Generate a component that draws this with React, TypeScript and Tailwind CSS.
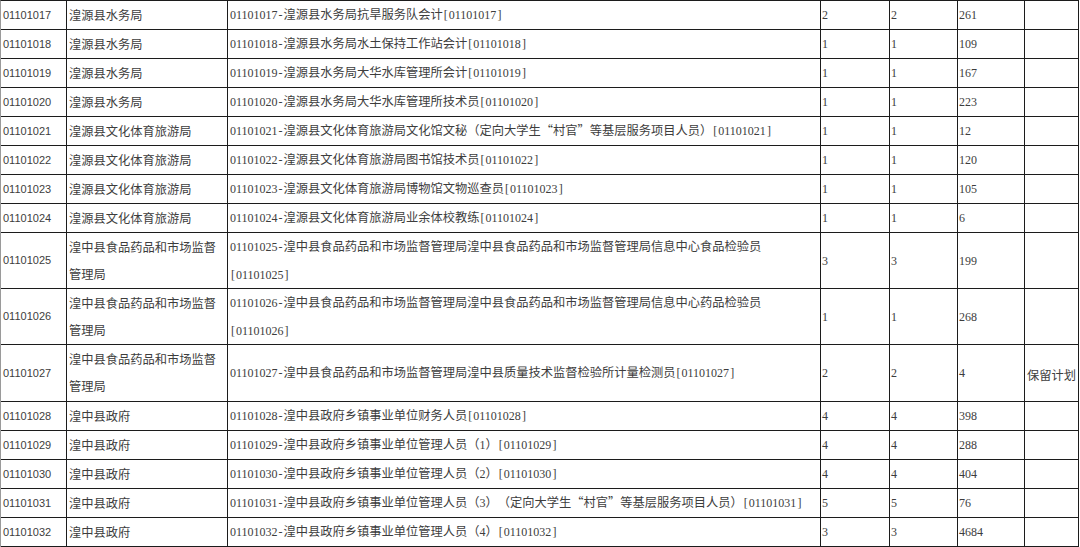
import React from 'react';

interface Row {
  code: string;
  dept: string[];
  pos: string[];
  plan: string;
  pass: string;
  apply: string;
  note?: string;
  h: string;
}

const SHUIWU = ['湟源县水务局'];
const WENHUA = ['湟源县文化体育旅游局'];
const SHIPIN = ['湟中县食品药品和市场监督', '管理局'];
const ZHENGFU = ['湟中县政府'];

const rows: Row[] = [
  { code: '01101017', dept: SHUIWU, pos: ['01101017-湟源县水务局抗旱服务队会计[01101017]'], plan: '2', pass: '2', apply: '261', h: 'h-[29px]' },
  { code: '01101018', dept: SHUIWU, pos: ['01101018-湟源县水务局水土保持工作站会计[01101018]'], plan: '1', pass: '1', apply: '109', h: 'h-[29px]' },
  { code: '01101019', dept: SHUIWU, pos: ['01101019-湟源县水务局大华水库管理所会计[01101019]'], plan: '1', pass: '1', apply: '167', h: 'h-[29px]' },
  { code: '01101020', dept: SHUIWU, pos: ['01101020-湟源县水务局大华水库管理所技术员[01101020]'], plan: '1', pass: '1', apply: '223', h: 'h-[29px]' },
  { code: '01101021', dept: WENHUA, pos: ['01101021-湟源县文化体育旅游局文化馆文秘（定向大学生“村官”等基层服务项目人员）[01101021]'], plan: '1', pass: '1', apply: '12', h: 'h-[29px]' },
  { code: '01101022', dept: WENHUA, pos: ['01101022-湟源县文化体育旅游局图书馆技术员[01101022]'], plan: '1', pass: '1', apply: '120', h: 'h-[29px]' },
  { code: '01101023', dept: WENHUA, pos: ['01101023-湟源县文化体育旅游局博物馆文物巡查员[01101023]'], plan: '1', pass: '1', apply: '105', h: 'h-[29px]' },
  { code: '01101024', dept: WENHUA, pos: ['01101024-湟源县文化体育旅游局业余体校教练[01101024]'], plan: '1', pass: '1', apply: '6', h: 'h-[29px]' },
  { code: '01101025', dept: SHIPIN, pos: ['01101025-湟中县食品药品和市场监督管理局湟中县食品药品和市场监督管理局信息中心食品检验员', '[01101025]'], plan: '3', pass: '3', apply: '199', h: 'h-[56px]' },
  { code: '01101026', dept: SHIPIN, pos: ['01101026-湟中县食品药品和市场监督管理局湟中县食品药品和市场监督管理局信息中心药品检验员', '[01101026]'], plan: '1', pass: '1', apply: '268', h: 'h-[56px]' },
  { code: '01101027', dept: SHIPIN, pos: ['01101027-湟中县食品药品和市场监督管理局湟中县质量技术监督检验所计量检测员[01101027]'], plan: '2', pass: '2', apply: '4', note: '保留计划', h: 'h-[57px]' },
  { code: '01101028', dept: ZHENGFU, pos: ['01101028-湟中县政府乡镇事业单位财务人员[01101028]'], plan: '4', pass: '4', apply: '398', h: 'h-[29px]' },
  { code: '01101029', dept: ZHENGFU, pos: ['01101029-湟中县政府乡镇事业单位管理人员（1）[01101029]'], plan: '4', pass: '4', apply: '288', h: 'h-[29px]' },
  { code: '01101030', dept: ZHENGFU, pos: ['01101030-湟中县政府乡镇事业单位管理人员（2）[01101030]'], plan: '4', pass: '4', apply: '404', h: 'h-[29px]' },
  { code: '01101031', dept: ZHENGFU, pos: ['01101031-湟中县政府乡镇事业单位管理人员（3）（定向大学生“村官”等基层服务项目人员）[01101031]'], plan: '5', pass: '5', apply: '76', h: 'h-[29px]' },
  { code: '01101032', dept: ZHENGFU, pos: ['01101032-湟中县政府乡镇事业单位管理人员（4）[01101032]'], plan: '3', pass: '3', apply: '4684', h: 'h-[29px]' },
];

// digits in the serif face, punctuation on a fixed half-width, CJK in the CJK face
const Mixed: React.FC<{ text: string }> = ({ text }) => (
  <>
    {text.split(/([0-9]+|[-[\]])/).filter(Boolean).map((part, i) => {
      if (/^[0-9]+$/.test(part)) {
        return (
          <span key={i} className="font-['Liberation_Serif',serif] text-[12px]">{part}</span>
        );
      }
      if (/^[-[\]]$/.test(part)) {
        return (
          <span key={i} className="inline-block w-[6px] text-center font-['Liberation_Serif',serif] text-[12px]">{part}</span>
        );
      }
      return <span key={i}>{part}</span>;
    })}
  </>
);

const cell = 'flex items-center border-r border-[#1c1c1c] overflow-hidden whitespace-nowrap';

export default function App() {
  return (
    <div
      lang="zh-CN"
      className="w-[1080px] h-[547px] bg-white overflow-hidden text-[#3d3d3d] text-[12.25px] font-['Noto_Sans_CJK_SC',sans-serif] [text-spacing-trim:space-all]"
    >
      <div className="w-[1079px] flex flex-col border-t border-l border-t-[#1c1c1c] border-l-[#9a9a9a]">
        {rows.map((r) => (
          <div
            key={r.code}
            className={`grid grid-cols-[66px_161px_593px_69px_68px_67px_54px] border-b border-[#1c1c1c] ${r.h}`}
          >
            <div className={`${cell} pl-[2px] font-['Liberation_Sans',sans-serif] text-[11px]`}>{r.code}</div>
            <div className={`${cell} pl-[2px]`}>
              <div className="leading-[27px]">
                {r.dept.map((d, i) => (
                  <div key={i}>{d}</div>
                ))}
              </div>
            </div>
            <div className={`${cell} pl-[2px]`}>
              <div className="leading-[27px]">
                {r.pos.map((p, i) => (
                  <div key={i}>
                    <Mixed text={p} />
                  </div>
                ))}
              </div>
            </div>
            <div className={`${cell} pl-[1px] font-['Liberation_Serif',serif] text-[12px]`}>{r.plan}</div>
            <div className={`${cell} pl-[1px] font-['Liberation_Serif',serif] text-[12px]`}>{r.pass}</div>
            <div className={`${cell} pl-[1px] font-['Liberation_Serif',serif] text-[12px]`}>{r.apply}</div>
            <div className={`${cell} pl-[2px] pt-[4px]`}>{r.note ?? ''}</div>
          </div>
        ))}
      </div>
    </div>
  );
}
